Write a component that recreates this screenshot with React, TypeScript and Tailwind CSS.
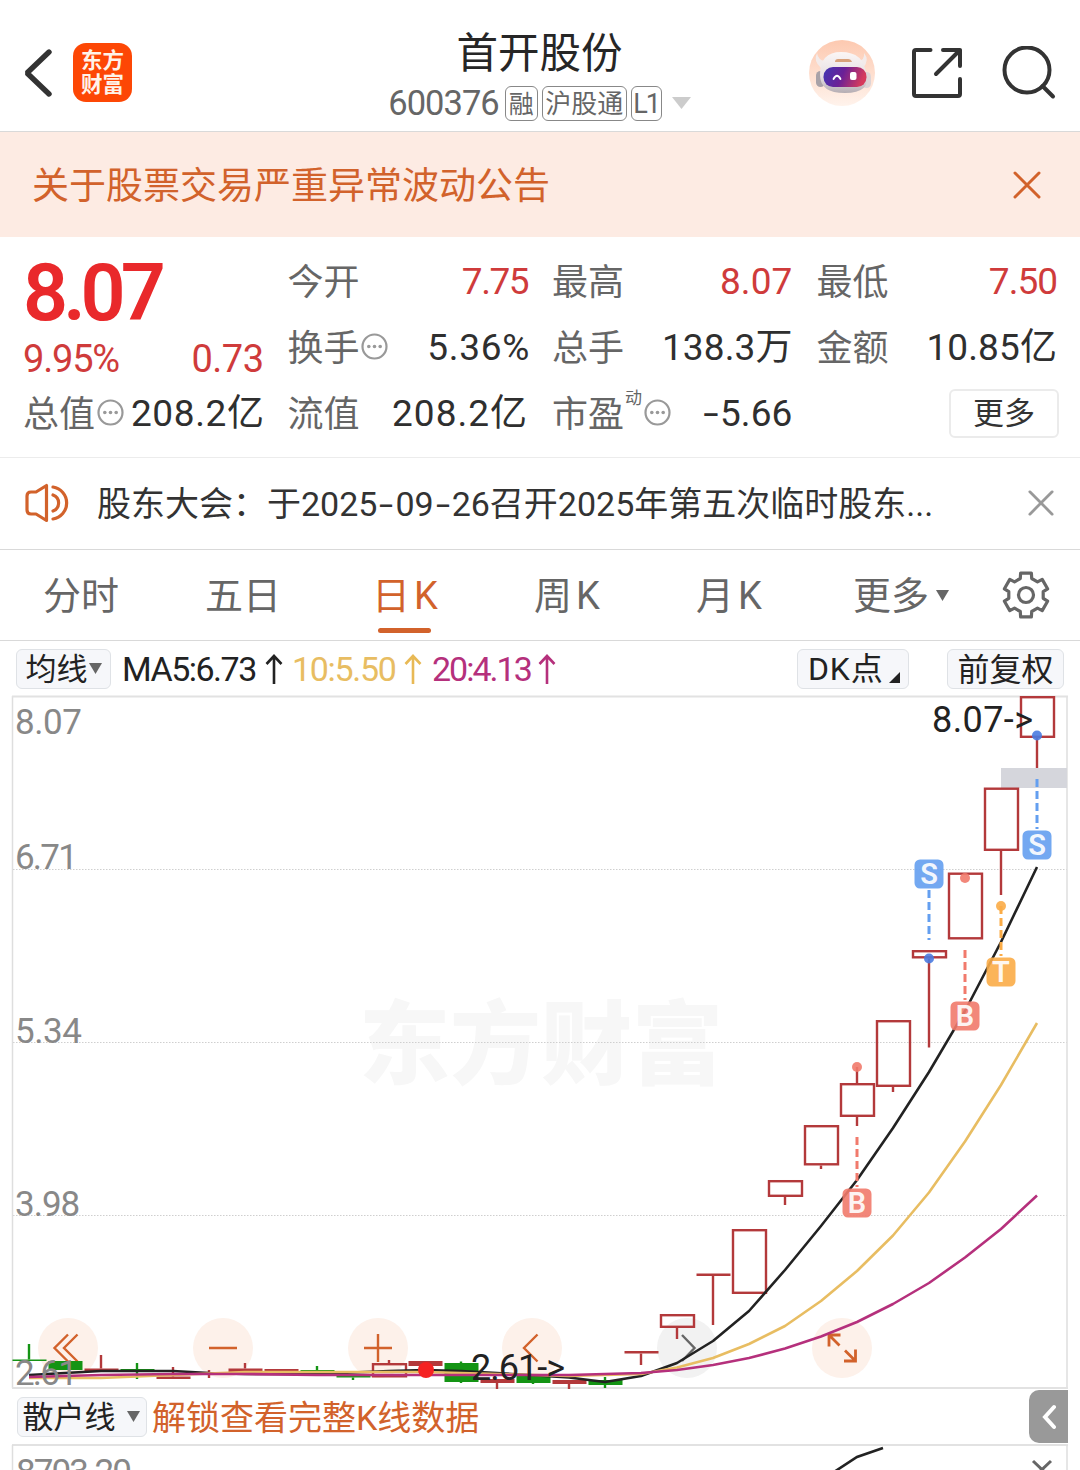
import React from 'react'

type Candle = {
  x: number
  top: number
  bottom: number
  high?: number
  low?: number
  kind: 'up' | 'upFill' | 'down'
}

const RED = '#b3393b'
const GREEN = '#149414'
const ORANGE = '#d2622b'

const candles: Candle[] = [
  { x: 29, top: 1359.5, bottom: 1361, high: 1344, kind: 'down' },
  { x: 65, top: 1361, bottom: 1370, kind: 'down' },
  { x: 101, top: 1368.5, bottom: 1371, high: 1355, kind: 'upFill' },
  { x: 137, top: 1369, bottom: 1372, high: 1363, low: 1379, kind: 'down' },
  { x: 173, top: 1376.5, bottom: 1379, high: 1367, kind: 'upFill' },
  { x: 209, top: 1373, bottom: 1375, high: 1370, low: 1378, kind: 'upFill' },
  { x: 245, top: 1368.5, bottom: 1372, high: 1363, kind: 'upFill' },
  { x: 281, top: 1369, bottom: 1371, kind: 'upFill' },
  { x: 317, top: 1370, bottom: 1372, high: 1366, kind: 'down' },
  { x: 353, top: 1374, bottom: 1377.5, low: 1380, kind: 'down' },
  { x: 389, top: 1363, bottom: 1377.5, high: 1360, kind: 'up' },
  { x: 425, top: 1361, bottom: 1366, kind: 'upFill' },
  { x: 461, top: 1363, bottom: 1382, high: 1361.5, low: 1383, kind: 'down' },
  { x: 497, top: 1379, bottom: 1383, low: 1389, kind: 'upFill' },
  { x: 533, top: 1376, bottom: 1383, low: 1384, kind: 'down' },
  { x: 569, top: 1380, bottom: 1384, low: 1389, kind: 'upFill' },
  { x: 605, top: 1380, bottom: 1385, high: 1377, low: 1388, kind: 'down' },
  { x: 641, top: 1351, bottom: 1353.5, low: 1365, kind: 'upFill' },
  { x: 677, top: 1314, bottom: 1328, low: 1339, kind: 'up' },
  { x: 713, top: 1273.5, bottom: 1276, low: 1325, kind: 'upFill' },
  { x: 749, top: 1229, bottom: 1294, kind: 'up' },
  { x: 785, top: 1180, bottom: 1197, low: 1205, kind: 'up' },
  { x: 821, top: 1125, bottom: 1165.5, low: 1169, kind: 'up' },
  { x: 857, top: 1083, bottom: 1117, high: 1067, low: 1126, kind: 'up' },
  { x: 893, top: 1020, bottom: 1087, low: 1092, kind: 'up' },
  { x: 929, top: 950, bottom: 958.5, low: 1047.5, kind: 'up' },
  { x: 965, top: 872.5, bottom: 939.5, kind: 'up' },
  { x: 1001, top: 787.5, bottom: 851, low: 895, kind: 'up' },
  { x: 1037, top: 696, bottom: 738, low: 768, kind: 'up' },
]

const ma5 =
  '29,1375 65,1373 101,1371 173,1371 209,1373 245,1374 317,1374 389,1371 425,1370 461,1371 497,1373 569,1377.5 605,1382 641,1376 677,1363 713,1341 749,1311 785,1270 821,1226 857,1180 893,1128 929,1072 965,1011 1001,942 1037,867'
const ma10 =
  '29,1378 101,1378 173,1375 245,1372 317,1372 425,1372 497,1374 569,1376 641,1374 677,1367.5 713,1358 749,1344 785,1326 821,1301 857,1271 893,1235.5 929,1192.5 965,1141.5 1001,1085 1037,1023'
const ma20 =
  '29,1377 101,1375 173,1374 245,1374 317,1375 461,1375 569,1375 641,1373 677,1370 713,1365 749,1358 785,1348.5 821,1336.5 857,1322 893,1304 929,1283 965,1257.5 1001,1229 1037,1195.5'

const signals = [
  { x: 857, y: 1203, label: 'B', color: '#f17a6c', from: 1137, to: 1187, dot: 1067 },
  { x: 929, y: 874, label: 'S', color: '#649ff0', from: 890, to: 940, dot: 958.5 },
  { x: 965, y: 1016, label: 'B', color: '#f17a6c', from: 950, to: 1000, dot: 878 },
  { x: 1001, y: 972, label: 'T', color: '#fbac47', from: 906, to: 956, dot: 906 },
  { x: 1037, y: 845, label: 'S', color: '#649ff0', from: 779, to: 829, dot: 735.5 },
]

const gridLabels = [
  { y: 734, text: '8.07', spacing: -0.4 },
  { y: 869, text: '6.71', spacing: -1.8 },
  { y: 1043, text: '5.34', spacing: -0.4 },
  { y: 1216, text: '3.98', spacing: -1 },
  { y: 1385, text: '2.61', spacing: -1.8 },
]

const gearPath = () => {
  const pts: string[] = []
  for (let i = 0; i < 6; i++) {
    const a = i * 60 - 90
    const corners = [
      [-19, 17.5],
      [-14, 22.5],
      [14, 22.5],
      [19, 17.5],
    ]
    corners.forEach(([d, r]) => {
      const t = ((a + d) * Math.PI) / 180
      pts.push(`${(24 + r * Math.cos(t)).toFixed(1)} ${(24 + r * Math.sin(t)).toFixed(1)}`)
    })
  }
  return `M${pts.join('L')}Z`
}

const Close = ({ className }: { className: string }) => (
  <svg className={className} viewBox="0 0 28 28" fill="none" stroke="currentColor" strokeWidth="3">
    <path d="M2 2L26 26M26 2L2 26" strokeLinecap="round" />
  </svg>
)

const Dots = () => (
  <svg className="mb-[5px] ml-[1.5px] size-[27px] shrink-0 text-[#999]" viewBox="0 0 27 27">
    <circle cx="13.5" cy="13.5" r="12" fill="none" stroke="currentColor" strokeWidth="2.2" />
    <circle cx="7.8" cy="13.5" r="1.8" fill="currentColor" />
    <circle cx="13.5" cy="13.5" r="1.8" fill="currentColor" />
    <circle cx="19.2" cy="13.5" r="1.8" fill="currentColor" />
  </svg>
)

const Hyphen = () => <span className="inline-block w-[18px] scale-x-150 text-center tracking-normal">-</span>

const UpArrow = ({ className }: { className: string }) => (
  <svg className={className} width="18" height="30" viewBox="0 0 18 30" fill="none" stroke="currentColor" strokeWidth="2.6">
    <path d="M9 30V2M1.5 10L9 2L16.5 10" />
  </svg>
)

const Triangle = ({ className }: { className: string }) => (
  <svg className={className} viewBox="0 0 12 10" preserveAspectRatio="none" fill="currentColor">
    <path d="M0 0H12L6 10Z" />
  </svg>
)

const Robot = () => (
  <svg width="66" height="66" viewBox="0 0 66 66">
    <defs>
      <linearGradient id="halo" x1="0" y1="0" x2="0" y2="1">
        <stop offset="0" stopColor="#fdc9b0" />
        <stop offset="1" stopColor="#fff3ec" />
      </linearGradient>
      <linearGradient id="visor" x1="0" y1="0" x2="1" y2="0.2">
        <stop offset="0" stopColor="#4037b4" />
        <stop offset="0.5" stopColor="#6b2096" />
        <stop offset="1" stopColor="#d63a5c" />
      </linearGradient>
      <linearGradient id="shell" x1="0" y1="0" x2="0" y2="1">
        <stop offset="0" stopColor="#fbf6f5" />
        <stop offset="0.6" stopColor="#e6dfe2" />
        <stop offset="1" stopColor="#b5adb3" />
      </linearGradient>
    </defs>
    <circle cx="33" cy="33" r="33" fill="url(#halo)" />
    <path d="M8 13Q9 20 16 21L12 28Q4 21 8 13ZM55 13Q56 20 49 21L54 28Q61 20 55 13Z" fill="#f3ebea" />
    <rect x="7" y="31" width="9" height="16" rx="4.5" fill="#a9a2a8" />
    <rect x="53" y="32" width="9" height="16" rx="4.5" fill="#ddd4d6" />
    <path d="M11 35Q11 12 32 12Q55 12 57 34Q62 53 36 53Q11 53 11 35Z" fill="url(#shell)" />
    <path d="M26 22Q26 19 29 19H39Q42 19 43 22Z" fill="#d9a27b" />
    <rect x="14.500" y="27" width="43" height="20" rx="9.500" fill="url(#visor)" />
    <path d="M24.500 39Q28 32.500 31.500 39" fill="none" stroke="#fff" strokeWidth="1.800" strokeLinecap="round" />
    <rect x="41" y="32" width="6.500" height="8" rx="2" fill="#fff" />
  </svg>
)

const Header = () => (
  <header className="flex h-[132px] shrink-0 items-start justify-between border-b border-[#d9d9d9] pr-[24px] pl-[23px]">
    <div className="flex w-[330px] items-center gap-[21px] pt-[43px]">
      <svg width="29" height="50" viewBox="0 0 29 50" fill="none" stroke="#333" strokeWidth="5.4" strokeLinecap="round">
        <path d="M26 4L4 25L26 46" strokeLinejoin="bevel" />
      </svg>
      <div className="flex size-[59px] flex-col items-center justify-center rounded-[13px] bg-[#fd4705] pt-[1px] text-[21.5px] leading-[24.5px] font-bold text-[#fff3ea]">
        <span>东方</span>
        <span>财富</span>
      </div>
    </div>
    <div className="flex flex-col items-center">
      <h1 className="mt-[33px] text-[41.5px] leading-[42px] text-[#262626]">首开股份</h1>
      <div className="mt-[10px] flex items-center gap-[4px] text-[#666]">
        <span className="mr-[2px] text-[34.5px] leading-[36px] tracking-[-1px]">600376</span>
        <span className="flex h-[35px] w-[33px] items-center justify-center rounded-[6px] border border-[#888] pt-[2px] text-[25px] leading-none">融</span>
        <span className="flex h-[35px] w-[85px] items-center justify-center rounded-[6px] border border-[#888] pt-[2px] text-[26px] leading-none">沪股通</span>
        <span className="flex h-[35px] w-[31px] items-center justify-center rounded-[6px] border border-[#888] pt-[2px] text-[27px] leading-none tracking-[-2px]">L1</span>
        <Triangle className="ml-[6px] h-[12px] w-[19px] text-[#ccc]" />
      </div>
    </div>
    <div className="flex w-[330px] items-center justify-end pt-[40px]">
      <Robot />
      <svg className="ml-[36px]" width="52" height="52" viewBox="0 0 52 52" fill="none" stroke="#333" strokeWidth="4" strokeLinecap="round" strokeLinejoin="round">
        <path d="M19.500 3H5Q3 3 3 5V47Q3 49 5 49H47Q49 49 49 47V32M32 3H49V19M49 3L25 27" />
      </svg>
      <svg className="ml-[39px]" width="54" height="54" viewBox="0 0 54 54" fill="none" stroke="#333" strokeWidth="4" strokeLinecap="round">
        <circle cx="25" cy="24" r="22.500" />
        <path d="M40.500 40L51 50.500" />
      </svg>
    </div>
  </header>
)

type CellProps = { label: React.ReactNode; value: React.ReactNode; red?: boolean; tight?: string }

const Cell = ({ label, value, red, tight = 'tracking-[0.1px]' }: CellProps) => (
  <div className="flex h-[66px] items-center justify-between">
    <span className="flex items-center pt-[3px] text-[36px] leading-none text-[#666]">{label}</span>
    <span className={`text-[37px] leading-none whitespace-nowrap ${tight} ${red ? 'text-[#cf3b3b]' : 'text-[#2f2f2f]'}`}>
      {value}
    </span>
  </div>
)

const Quote = () => (
  <section className="h-[221px] shrink-0 border-b border-[#ececec] px-[23px] pt-[11px]">
    <div className="grid grid-cols-4 gap-x-6">
      <div className="row-span-2 flex flex-col text-[#e9292b]">
        <span className="mt-[5px] text-[79px] leading-[80px] font-semibold tracking-[-5px]">8.07</span>
        <div className="mt-[7px] flex justify-between text-[38px] leading-[38px] text-[#cf3b3b]">
          <span className="tracking-[-1.2px]">9.95%</span>
          <span className="tracking-[-0.5px]">0.73</span>
        </div>
      </div>
      <Cell label="今开" value="7.75" red tight="tracking-[-1.5px]" />
      <Cell label="最高" value="8.07" red />
      <Cell label="最低" value="7.50" red tight="tracking-[-1px]" />
      <Cell label={<>换手<Dots /></>} value="5.36%" tight="tracking-[0.7px] -mr-[2px]" />
      <Cell label="总手" value="138.3万" />
      <Cell label="金额" value="10.85亿" />
      <Cell label={<>总值<Dots /></>} value="208.2亿" tight="tracking-[0.6px] -mr-[1px]" />
      <Cell label="流值" value="208.2亿" tight="tracking-[1px]" />
      <Cell
        label={
          <>
            市盈<sup className="-top-[17px] ml-[1px] text-[17px]">动</sup>
            <Dots />
          </>
        }
        value={<><Hyphen />5.66</>}
      />
      <div className="flex h-[66px] items-center justify-end">
        <button className="-mr-[2px] h-[49px] w-[110px] rounded-[6px] border-2 border-[#ebebeb] pt-[1px] text-[31px] leading-none text-[#333]">更多</button>
      </div>
    </div>
  </section>
)

const News = () => (
  <section className="flex h-[92px] shrink-0 items-center border-b border-[#d9d9d9] pr-[26px] pl-[24px]">
    <svg className="mb-[2px]" width="48" height="42" viewBox="0 0 48 42" fill="none" stroke={ORANGE} strokeWidth="3.2" strokeLinejoin="round" strokeLinecap="round">
      <path d="M3 14Q3 10 7 10H12L22.500 3.500V38.500L12 32H7Q3 32 3 28Z" />
      <path d="M29 13A8.500 8.500 0 0 1 29 29M29 5A16.200 16.200 0 0 1 29 37" />
    </svg>
    <p className="ml-[25px] flex-1 text-[34px] leading-none whitespace-nowrap text-[#333]">
      股东大会：于2025<Hyphen />09<Hyphen />26召开2025年第五次临时股东...
    </p>
    <Close className="mb-[1px] size-[26px] text-[#999]" />
  </section>
)

const tabs = ['分时', '五日', '日K', '周K', '月K']

const Tabs = () => (
  <nav className="flex h-[91px] shrink-0 border-b border-[#d9d9d9] text-[38px] leading-none text-[#666]">
    {tabs.map(tab => (
      <div
        key={tab}
        className={`relative flex w-[162px] items-center justify-center pt-[2px] ${tab.endsWith('K') ? 'gap-[4px]' : ''} ${tab === '日K' ? 'text-[#d2622b]' : ''}`}
      >
        <span>{tab[0]}</span>
        <span>{tab[1]}</span>
        {tab === '日K' && (
          <span className="absolute bottom-[7px] left-[54px] h-[5px] w-[53px] rounded-full bg-[#d2622b]" />
        )}
      </div>
    ))}
    <div className="flex w-[182px] items-center justify-center gap-[7px]">
      <span className="pt-[2px]">更多</span>
      <Triangle className="h-[11px] w-[13px]" />
    </div>
    <div className="flex items-center pl-[10px]">
      <svg width="48" height="48" viewBox="0 0 48 48" fill="none" stroke="#666" strokeWidth="3.2" strokeLinejoin="round">
        <path d={gearPath()} />
        <circle cx="24" cy="24" r="7.500" />
      </svg>
    </div>
  </nav>
)

const Legend = () => (
  <div className="flex h-[55px] shrink-0 items-center pr-[16px] pl-[16px] text-[32px] leading-none text-[#222]">
    <span className="flex h-[40px] w-[95px] items-center justify-center rounded-[6px] border border-[#dfe2e6] bg-[#f6f7fa] text-[31px]">
      <span className="pt-[2px]">均线</span>
      <Triangle className="ml-[1px] h-[11px] w-[13px] text-[#666]" />
    </span>
    <span className="ml-[11px] w-[143px] text-[34px] tracking-[-1.5px]">MA5:6.73</span>
    <UpArrow className="mr-[9px]" />
    <span className="w-[112px] text-[34px] tracking-[-1.3px] text-[#e8bd62]">10:5.50</span>
    <UpArrow className="mr-[10px] text-[#e8b955]" />
    <span className="w-[106px] text-[34px] tracking-[-2px] text-[#b5307c]">20:4.13</span>
    <UpArrow className="text-[#b5307c]" />
    <span className="ml-auto flex h-[40px] w-[112px] items-center rounded-[6px] border border-[#dfe2e6] bg-[#f6f7fa] pl-[10px]">
      <span className="pt-[1px] tracking-[0.8px]">DK点</span>
      <svg className="mt-[17px] ml-[6px]" width="11" height="11" viewBox="0 0 11 11" fill="#222">
        <path d="M11 0V11H0Z" />
      </svg>
    </span>
    <span className="ml-[38px] flex h-[40px] w-[117px] items-center justify-center rounded-[6px] border border-[#dfe2e6] bg-[#f6f7fa] pt-[2px]">
      前复权
    </span>
  </div>
)

const CandleMark = ({ c }: { c: Candle }) => {
  const color = c.kind === 'down' ? GREEN : RED
  return (
    <g stroke={color} strokeWidth="2.400">
      {c.high && <path d={`M${c.x} ${c.high}V${c.top}`} />}
      {c.low && <path d={`M${c.x} ${c.bottom}V${c.low}`} />}
      {c.kind === 'up' ? (
        <rect x={c.x - 16} y={c.top + 1.2} width="33" height={c.bottom - c.top - 2.4} fill="none" />
      ) : (
        <rect x={c.x - 16.5} y={c.top} width="34" height={c.bottom - c.top} fill={color} stroke="none" />
      )}
    </g>
  )
}

const Chart = () => (
  <svg className="block shrink-0 overflow-visible" width="1080" height="693" viewBox="0 696 1080 693">
    <text x="541" y="1077" textAnchor="middle" fontSize="91" fontWeight="900" fill="#f7f7f7">东方财富</text>
    <path d="M13 869.500H1067M13 1042.500H1067M13 1215.500H1067" stroke="#cfcfcf" strokeDasharray="1.500 1.500" />
    <path d="M12.500 696V1388M1067 696V1388" stroke="#dedede" strokeWidth="1.500" />
    <path d="M12 696.500H1068M12 1388H1068" stroke="#e2e2e2" strokeWidth="2" />
    <rect x="1001" y="768" width="66" height="20" fill="#d5d6dc" />

    {[68, 223, 378, 532, 687, 842].map(x => (
      <circle key={x} cx={x} cy="1348" r="30" fill={x === 687 ? '#f2f2f2' : '#fdf1ea'} />
    ))}
    <g fill="none" stroke={ORANGE} strokeWidth="2.400">
      <path d="M68 1334.500L54.500 1348L68 1361.500M77.500 1334.500L64 1348L77.500 1361.500" />
      <path d="M209 1348H237M364 1348H392M378 1334V1362" />
      <path d="M537.500 1334.500L524 1348L537.500 1361.500" />
      <path d="M840.500 1335H829V1346.500M829 1335L839.500 1345.500M844 1361H855.500V1349.500M855.500 1361L845 1350.500" strokeWidth="2.800" />
      <path d="M682 1335L694.500 1348L682 1361" stroke="#666" />
    </g>

    {candles.map(c => (
      <CandleMark key={c.x} c={c} />
    ))}
    <g fill="none" strokeWidth="2.600" strokeLinejoin="round">
      <polyline points={ma5} stroke="#222" />
      <polyline points={ma10} stroke="#e8bd62" />
      <polyline points={ma20} stroke="#b5307c" />
    </g>
    <circle cx="426" cy="1370" r="8" fill="#f52222" />

    {signals.map(s => (
      <g key={s.x}>
        <path d={`M${s.x} ${s.from}V${s.to}`} stroke={s.color} strokeWidth="3" strokeDasharray="8 4" />
        <circle cx={s.x} cy={s.dot} r="5" fill={s.label === 'S' ? '#4a7be0' : s.color} fillOpacity="0.9" />
        <rect x={s.x - 14.5} y={s.y - 14.5} width="29" height="29" rx="5.500" fill={s.color} fillOpacity="0.9" />
        <text x={s.x} y={s.y + 10} textAnchor="middle" fontSize="29" fontWeight="600" fill="#fff" fillOpacity="0.92">
          {s.label}
        </text>
      </g>
    ))}

    {gridLabels.map(g => (
      <text key={g.y} x="15" y={g.y} fontSize="35" letterSpacing={g.spacing} fill="#888">
        {g.text}
      </text>
    ))}
    <text x="932" y="732" fontSize="36" letterSpacing="0.400" fill="#222">8.07-&gt;</text>
    <text x="471" y="1380" fontSize="36" letterSpacing="-1" fill="#222">2.61-&gt;</text>
  </svg>
)

const SubChart = () => (
  <>
    <div className="flex h-[55px] shrink-0 items-center justify-between pr-[12px] pl-[17px] leading-none">
      <div className="flex items-center">
        <span className="flex h-[40px] w-[130px] items-center justify-center rounded-[6px] border border-[#dfe2e6] bg-[#f6f7fa] text-[31px] text-[#222]">
          <span className="-ml-[2px] pt-[2px]">散户线</span>
          <Triangle className="ml-[11px] h-[11px] w-[13px] text-[#666]" />
        </span>
        <span className="ml-[5px] pt-[2px] text-[34px] text-[#d2622b]">解锁查看完整K线数据</span>
      </div>
      <div className="flex h-[53px] w-[39px] items-center justify-center rounded-l-[10px] bg-[#999]">
        <svg width="14" height="26" viewBox="0 0 14 26" fill="none" stroke="#fff" strokeWidth="4" strokeLinecap="round">
          <path d="M12 3L3 13L12 23" />
        </svg>
      </div>
    </div>
    <svg className="block shrink-0" width="1080" height="27" viewBox="0 1443 1080 27">
      <path d="M12 1444H1068" stroke="#e2e2e2" strokeWidth="2" />
      <path d="M12.500 1444V1470M1067 1444V1470" stroke="#dedede" strokeWidth="1.500" />
      <text x="16" y="1483" fontSize="35" letterSpacing="-1.900" fill="#888">8703.20</text>
      <path d="M834 1471L857 1456L883 1447" stroke="#222" strokeWidth="2.600" fill="none" />
      <path d="M1033 1460L1051 1477M1051 1460L1033 1477" stroke="#666" strokeWidth="3" fill="none" />
    </svg>
  </>
)

const App = () => {
  return (
    <div className="flex h-[1470px] w-[1080px] flex-col overflow-hidden bg-white font-['Roboto','Noto_Sans_CJK_SC',sans-serif]">
      <Header />
      <div className="flex h-[105px] shrink-0 items-center justify-between bg-[#fdebe3] pr-[39px] pl-[32px] text-[#d2622b]">
        <span className="pt-[3px] text-[37px] leading-none">关于股票交易严重异常波动公告</span>
        <Close className="size-[28px]" />
      </div>
      <Quote />
      <News />
      <Tabs />
      <Legend />
      <Chart />
      <SubChart />
    </div>
  )
}

export default App
